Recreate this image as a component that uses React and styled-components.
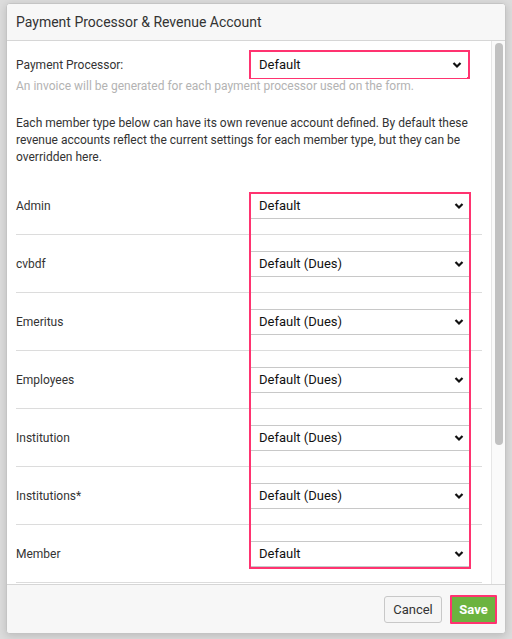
import React from "react";
import styled, { createGlobalStyle } from "styled-components";

const GlobalStyle = createGlobalStyle`
    html, body {
        margin: 0;
        padding: 0;
        background: #dcdcdc;
        font-family: Roboto, "Liberation Sans", Arial, sans-serif;
    }
`;

const Page = styled.div`
    width: 512px;
    height: 639px;
    padding: 3px 6px 5px 6px;
    box-sizing: border-box;
    overflow: hidden;
`;

const Modal = styled.div`
    width: 500px;
    height: 631px;
    box-sizing: border-box;
    background: #fff;
    border: 1px solid #c4c4c4;
    border-radius: 4px;
    box-shadow: 0 2px 8px rgba(0, 0, 0, 0.15);
    display: flex;
    flex-direction: column;
    overflow: hidden;
`;

const Header = styled.div`
    height: 37px;
    flex: none;
    box-sizing: border-box;
    background: #f7f7f7;
    border-bottom: 1px solid #d6d6d6;
    display: flex;
    align-items: center;
    padding: 0 9px;
`;

const Title = styled.h2`
    margin: 0;
    font-size: 14px;
    font-weight: 400;
    color: #333;
`;

const Body = styled.div`
    flex: 1;
    display: flex;
    min-height: 0;
`;

const Content = styled.div`
    flex: 1;
    padding: 9px 9px 0 9px;
    overflow: hidden;
`;

const Track = styled.div`
    width: 14px;
    flex: none;
    box-sizing: border-box;
    background: #fafafa;
    border-left: 1px solid #e6e6e6;
    padding: 2px 2px 0 3px;
`;

const Thumb = styled.div`
    height: 402px;
    background: #c1c1c1;
    border-radius: 4px;
`;

const ProcessorRow = styled.div`
    display: flex;
    align-items: center;
    justify-content: space-between;
    padding-right: 12px;
`;

const Label = styled.span`
    font-size: 12px;
    color: #333;
`;

const Highlight = styled.div`
    border: 2.5px solid #ff3370;
    box-sizing: border-box;
`;

const ProcessorBox = styled(Highlight)`
    width: 221px;
    height: 29px;
    display: flex;
    align-items: center;
`;

const Help = styled.p`
    margin: 0;
    font-size: 12px;
    line-height: 14px;
    color: #b3b3b3;
`;

const Intro = styled.p`
    margin: 22px 0 0 0;
    font-size: 12px;
    line-height: 17px;
    color: #333;
`;

const Rows = styled.div`
    position: relative;
    margin-top: 11px;
`;

const Row = styled.div`
    height: 58px;
    box-sizing: border-box;
    border-bottom: 1px solid #dcdcdc;
    display: flex;
    align-items: center;
    justify-content: space-between;
    padding-right: 12px;
`;

const RowsHighlight = styled(Highlight)`
    position: absolute;
    left: 233px;
    top: 15px;
    width: 222px;
    height: 377px;
    pointer-events: none;
`;

const SelectWrap = styled.div`
    position: relative;
    width: ${({ $w }) => $w || "220px"};
    height: 26px;
    box-sizing: border-box;
    background: #fff;
    border: ${({ $plain }) => ($plain ? "none" : "1px solid #c8c8c8")};
    display: flex;
    align-items: center;
    padding: 0 0 0 8px;
    font-size: 13px;
    color: #111;
`;

const Chevron = styled.svg`
    position: absolute;
    right: 4px;
    top: 50%;
    margin-top: -4px;
`;

const Footer = styled.div`
    height: 49px;
    flex: none;
    box-sizing: border-box;
    background: #f7f7f7;
    border-top: 1px solid #d6d6d6;
    display: flex;
    align-items: center;
    justify-content: flex-end;
    gap: 8px;
    padding: 0 8px 0 0;
`;

const CancelButton = styled.button`
    height: 27px;
    width: 58px;
    box-sizing: border-box;
    background: #f5f5f5;
    border: 1px solid #c8c8c8;
    border-radius: 3px;
    font-family: inherit;
    font-size: 13px;
    color: #333;
    padding: 0;
`;

const SaveButton = styled.button`
    height: 29px;
    width: 47px;
    box-sizing: border-box;
    background: #6cb33f;
    border: 2.5px solid #ff3370;
    border-radius: 1px;
    font-family: inherit;
    font-size: 13px;
    font-weight: 700;
    color: #fff;
    padding: 0;
`;

const Select = ({ value, plain, w }) => (
    <SelectWrap $plain={plain} $w={w}>
        {value}
        <Chevron width="12" height="8" viewBox="0 0 12 8">
            <path d="M2.5 2 L6 5.5 L9.5 2" fill="none" stroke="#111" strokeWidth="2.2" />
        </Chevron>
    </SelectWrap>
);

const memberTypes = [
    { name: "Admin", value: "Default" },
    { name: "cvbdf", value: "Default (Dues)" },
    { name: "Emeritus", value: "Default (Dues)" },
    { name: "Employees", value: "Default (Dues)" },
    { name: "Institution", value: "Default (Dues)" },
    { name: "Institutions*", value: "Default (Dues)" },
    { name: "Member", value: "Default" },
];

const App = () => {
    return (
        <Page>
            <GlobalStyle />
            <Modal>
                <Header>
                    <Title>Payment Processor &amp; Revenue Account</Title>
                </Header>
                <Body>
                    <Content>
                        <ProcessorRow>
                            <Label>Payment Processor:</Label>
                            <ProcessorBox>
                                <Select value="Default" plain w="216px" />
                            </ProcessorBox>
                        </ProcessorRow>
                        <Help>An invoice will be generated for each payment processor used on the form.</Help>
                        <Intro>
                            Each member type below can have its own revenue account defined. By default these
                            revenue accounts reflect the current settings for each member type, but they can be
                            overridden here.
                        </Intro>
                        <Rows>
                            {memberTypes.map((m) => (
                                <Row key={m.name}>
                                    <Label>{m.name}</Label>
                                    <Select value={m.value} />
                                </Row>
                            ))}
                            <RowsHighlight />
                        </Rows>
                    </Content>
                    <Track>
                        <Thumb />
                    </Track>
                </Body>
                <Footer>
                    <CancelButton>Cancel</CancelButton>
                    <SaveButton>Save</SaveButton>
                </Footer>
            </Modal>
        </Page>
    );
};

export default App;
